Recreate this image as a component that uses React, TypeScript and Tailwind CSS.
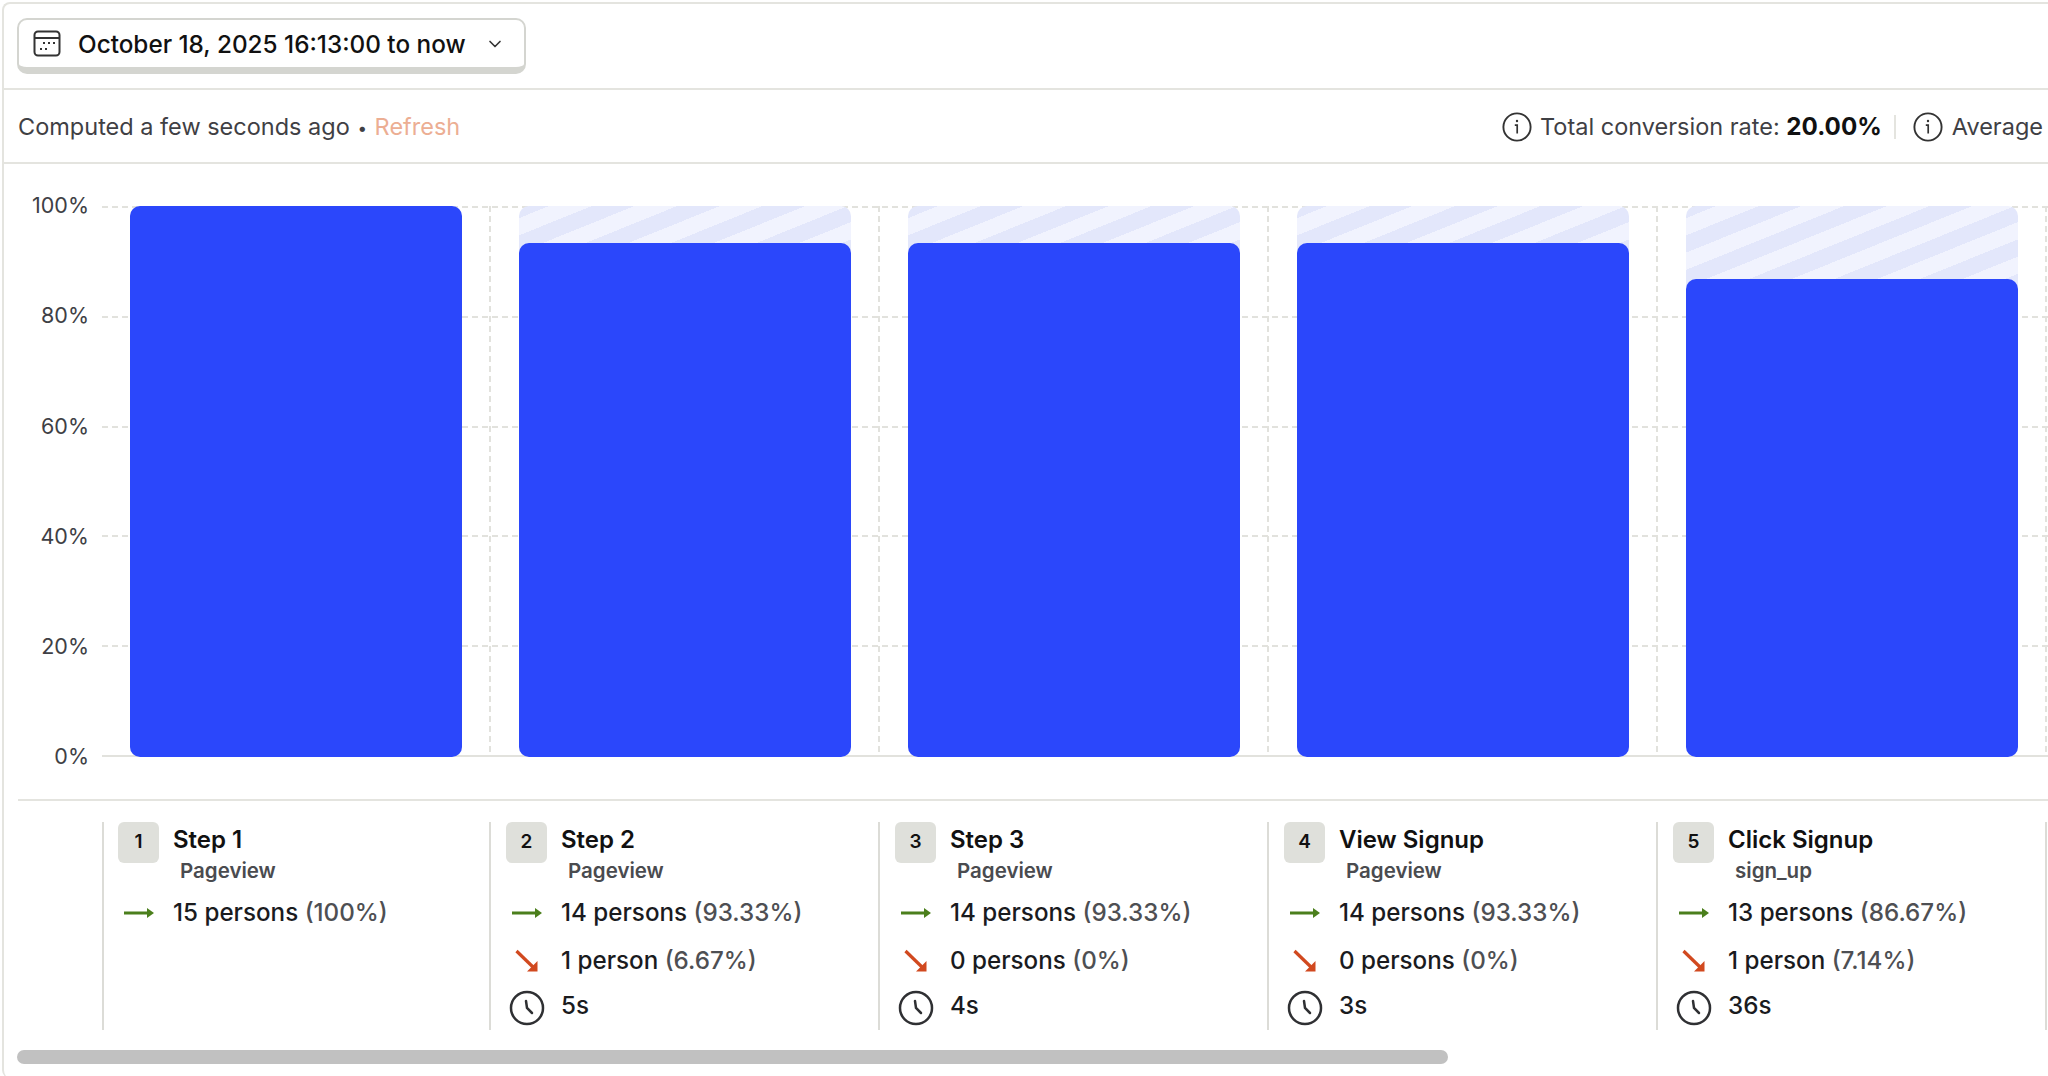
import { ChevronDown } from "lucide-react";

const steps = [
  { n: 1, name: "Step 1", event: "Pageview", conv: "15 persons", convPct: "(100%)", value: 100 },
  { n: 2, name: "Step 2", event: "Pageview", conv: "14 persons", convPct: "(93.33%)", drop: "1 person", dropPct: "(6.67%)", time: "5s", value: 93.33 },
  { n: 3, name: "Step 3", event: "Pageview", conv: "14 persons", convPct: "(93.33%)", drop: "0 persons", dropPct: "(0%)", time: "4s", value: 93.33 },
  { n: 4, name: "View Signup", event: "Pageview", conv: "14 persons", convPct: "(93.33%)", drop: "0 persons", dropPct: "(0%)", time: "3s", value: 93.33 },
  { n: 5, name: "Click Signup", event: "sign_up", conv: "13 persons", convPct: "(86.67%)", drop: "1 person", dropPct: "(7.14%)", time: "36s", value: 86.67 },
];

const ticks = ["100%", "80%", "60%", "40%", "20%", "0%"];

const CalendarIcon = () => (
  <svg width="28" height="27" viewBox="0 0 28 27" fill="none" className="shrink-0">
    <rect x="1.5" y="1.5" width="25" height="24" rx="3.5" stroke="#333" strokeWidth="2" />
    <path d="M1.5 8h25" stroke="#333" strokeWidth="2" />
    <g fill="#333">
      <rect x="10" y="12" width="2" height="2" />
      <rect x="15" y="12" width="2" height="2" />
      <rect x="20" y="12" width="2" height="2" />
      <rect x="7" y="18" width="2" height="2" />
      <rect x="12" y="18" width="2" height="2" />
    </g>
  </svg>
);

const InfoIcon = () => (
  <svg width="30" height="30" viewBox="0 0 30 30" fill="none" stroke="#333" strokeWidth="1.9" className="shrink-0">
    <circle cx="15" cy="15" r="13.6" />
    <path d="M12.8 13.2H15.2V21.4" strokeWidth="1.7" />
    <circle cx="15" cy="9" r="1.2" fill="#333" stroke="none" />
  </svg>
);

const ArrowRightIcon = () => (
  <svg width="30" height="14" viewBox="0 0 30 14" fill="#4b7f1c">
    <rect x="0" y="5.5" width="26" height="3" />
    <path d="M23 2l7 5-7 5z" />
  </svg>
);

const ArrowDropIcon = () => (
  <svg width="24" height="24" viewBox="0 0 24 24" fill="none">
    <path d="M1.5 2L19 19" stroke="#d1491f" strokeWidth="3.2" />
    <path d="M22.5 22.5H12L22.5 12z" fill="#d1491f" />
  </svg>
);

const ClockIcon = () => (
  <svg width="36" height="36" viewBox="0 0 36 36" fill="none" stroke="#2f3033" strokeWidth="2.5" strokeLinecap="round">
    <circle cx="18" cy="18" r="16" />
    <path d="M17 11l1 7 5 5" />
  </svg>
);

const Chart = () => (
  <div className="flex h-[551px] mt-[42px] pl-[16px]">
    <div className="flex flex-col justify-between w-[69px] text-right text-[21.5px] leading-none text-[#3e4045]">
      {ticks.map((t) => (
        <span key={t} className="h-0 flex items-center justify-end">{t}</span>
      ))}
    </div>
    <div className="relative flex-1 ml-[13px] flex">
      <div className="absolute inset-0 flex flex-col justify-between">
        {ticks.map((t) => (
          <div
            key={t}
            className={
              t === "0%"
                ? "h-[2px] bg-[#e2e2dd]"
                : "h-[2px] bg-[repeating-linear-gradient(90deg,#e2e2dd_0px,#e2e2dd_6px,transparent_6px,transparent_10px)]"
            }
          />
        ))}
      </div>
      {steps.map((s) => (
        <div key={s.n} className="relative w-[389px] shrink-0 pl-[28px] pr-[29px]">
          <div className="absolute right-0 top-0 bottom-0 w-[2px] bg-[repeating-linear-gradient(180deg,#e2e2dd_0px,#e2e2dd_6px,transparent_6px,transparent_10px)]" />
          <div className="relative h-full rounded-[10px] bg-[repeating-linear-gradient(-22deg,#f1f3fe_0px,#f1f3fe_16px,#e3e7fb_16px,#e3e7fb_32px)] flex flex-col justify-end">
            <div className="bg-[#2b47fb] rounded-[10px]" style={{ height: `${s.value}%` }} />
          </div>
        </div>
      ))}
    </div>
  </div>
);

const StepCell = ({ step }: { step: (typeof steps)[number] }) => (
  <div className={step.n === 1 ? "w-[387px] shrink-0 h-[208px] border-r-2 border-[#dcdcd7] pl-[14px] pr-3" : "w-[389px] shrink-0 h-[208px] border-r-2 border-[#dcdcd7] pl-[15px] pr-3"}>
    <div className="flex gap-[14px]">
      <span className="w-[41px] h-[41px] rounded-[6px] bg-[#dfe0db] flex items-center justify-center text-[19px] font-semibold text-[#111]">
        {step.n}
      </span>
      <div className="pt-[3px]">
        <div className="text-[24px] leading-[30px] font-semibold text-[#111]">{step.name}</div>
        <div className="ml-[7px] mt-[1px] text-[20.5px] leading-[30px] font-semibold text-[#4a4b4f]">{step.event}</div>
      </div>
    </div>
    <div className="flex flex-col mt-[12px] text-[24.2px] font-[450] text-[#1a1b1e]">
      <div className="flex items-center h-[30px]">
        <span className="w-[41px] flex justify-center mr-[14px]"><ArrowRightIcon /></span>
        <span>{step.conv} <span className="text-[#4e4f53]">{step.convPct}</span></span>
      </div>
      {step.drop && (
        <div className="flex items-center h-[30px] mt-[18px]">
          <span className="w-[41px] flex justify-center mr-[14px]"><ArrowDropIcon /></span>
          <span>{step.drop} <span className="text-[#4e4f53]">{step.dropPct}</span></span>
        </div>
      )}
      {step.time && (
        <div className="flex h-[38px] mt-[14px]">
          <span className="w-[41px] flex justify-center mr-[14px]"><ClockIcon /></span>
          <span className="leading-[30px] mt-[1px]">{step.time}</span>
        </div>
      )}
    </div>
  </div>
);

export default function App() {
  return (
    <div className="w-[2048px] h-[1076px] overflow-hidden bg-white" style={{ fontFamily: "Inter, sans-serif" }}>
      <div className="h-full ml-[2px] mt-[2px] pt-[1px] border-l-2 border-t-2 border-[#e4e4df] rounded-tl-[8px] rounded-bl-[8px]">
        <div className="h-[85px] border-b-2 border-[#e4e4df] pl-[13px] pt-[13px]">
          <button className="w-[509px] h-[56px] flex items-center rounded-[10px] border-2 border-[#d4d5d0] border-b-[7px] bg-white pl-[14px] pr-[19px] text-[24.3px] font-medium text-[#111]">
            <CalendarIcon />
            <span className="ml-[17px] pt-[2px] flex-1 text-left whitespace-nowrap">October 18, 2025 16:13:00 to now</span>
            <ChevronDown size={20} className="text-[#333]" />
          </button>
        </div>
        <div className="h-[74px] border-b-2 border-[#e4e4df] pl-[14px] pt-[2px] flex items-center justify-between text-[23.5px] text-[#3f4044] overflow-hidden">
          <div className="whitespace-nowrap">
            Computed a few seconds ago <span className="text-[17px] align-[1px] mx-[1px]">•</span> <span className="text-[#ecae93]">Refresh</span>
          </div>
          <div className="flex items-center whitespace-nowrap mr-[5px]">
            <InfoIcon />
            <span className="ml-[8px]">Total conversion rate: <b className="text-[24.2px] text-[#111]">20.00%</b></span>
            <span className="w-[2px] h-[24px] bg-[#e4e4df] ml-[12px] mr-[17px]" />
            <InfoIcon />
            <span className="ml-[9px]">Average</span>
          </div>
        </div>
        <Chart />
        <div className="ml-[14px] mt-[42px] border-t-2 border-[#e4e4df] pt-[21px] flex">
          <div className="w-[86px] shrink-0 border-r-2 border-[#dcdcd7]" />
          {steps.map((s) => (
            <StepCell key={s.n} step={s} />
          ))}
        </div>
        <div className="ml-[13px] mt-[20px] w-[1431px] h-[14px] rounded-full bg-[#c1c1c1]" />
      </div>
    </div>
  );
}
